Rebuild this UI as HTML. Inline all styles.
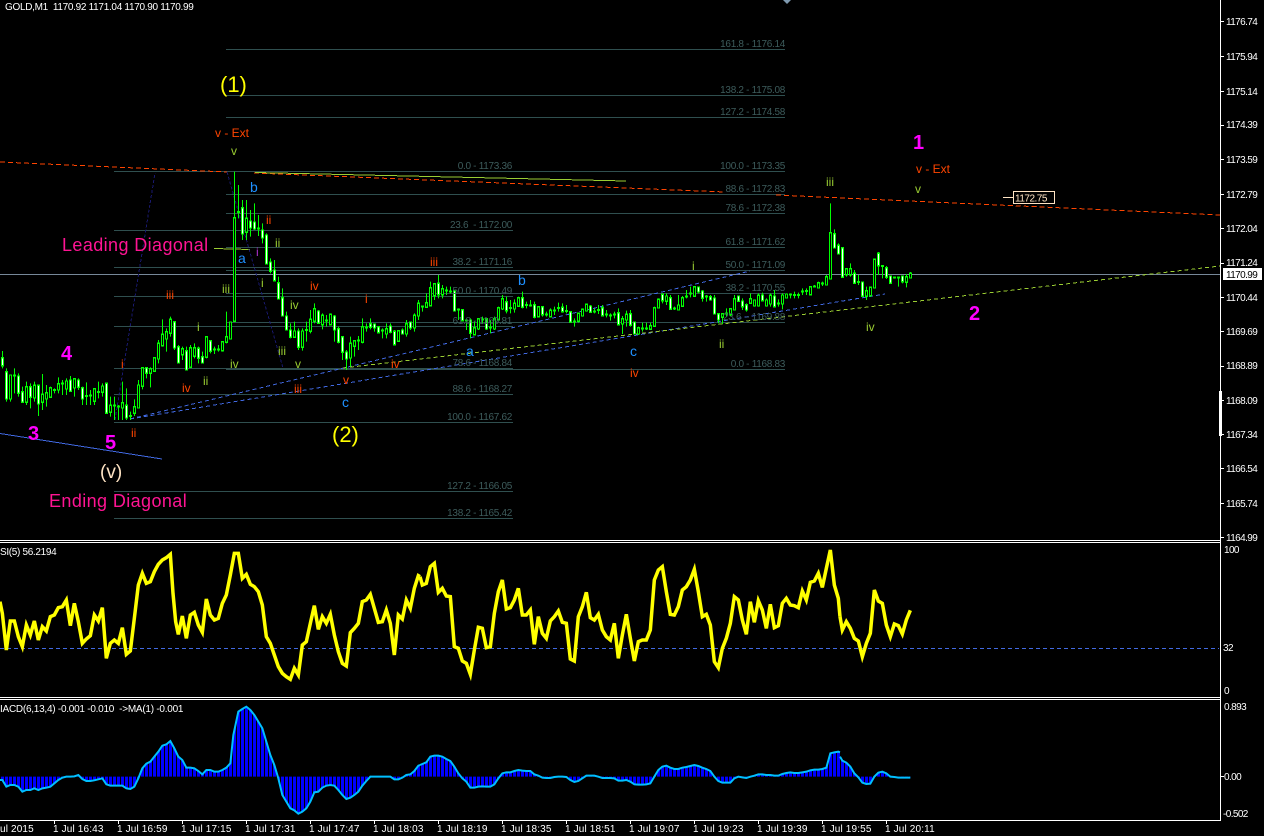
<!DOCTYPE html>
<html><head><meta charset="utf-8"><title>GOLD,M1</title>
<style>
html,body{margin:0;padding:0;background:#000;width:1264px;height:836px;overflow:hidden}
svg{display:block;font-family:"Liberation Sans",sans-serif}
text{white-space:pre}
.ax{font-size:10px;fill:#fff;letter-spacing:-.6px}
.dt{font-size:10px;fill:#fff;letter-spacing:.15px}
.fb{font-size:10px;fill:#3d5c5c;letter-spacing:-.3px;text-anchor:end}
.r{font-size:12px;fill:#ff4500}
.y{font-size:12px;fill:#9acd32}
.b{font-size:14px;fill:#1e90ff}
.m{font-size:20px;fill:#f0f;font-weight:bold}
.p{font-size:18px;fill:#ff1493;letter-spacing:.4px}
.g{font-size:22px;fill:#ff0}
</style></head><body>
<svg width="1264" height="836" viewBox="0 0 1264 836" xmlns="http://www.w3.org/2000/svg">
<defs>
<pattern id="st" patternUnits="userSpaceOnUse" width="12" height="12"><rect x="3" width="9" height="12" fill="#00f"/></pattern>
<path id="bh" d="M10 737h1v68h-1zM26 772h1v43h-1zM34 768h1v34h-1zM42 795h1v20h-1zM46 790h1v15h-1zM50 775h1v25h-1zM58 763h1v15h-1zM66 755h1v20h-1zM74 748h1v24h-1zM94 778h1v34h-1zM102 770h1v15h-1zM110 828h1v17h-1zM122 820h1v12h-1zM134 832h1v16h-1zM138 767h1v65h-1zM142 715h1v52h-1zM150 718h1v10h-1zM154 685h1v37h-1zM158 642h1v43h-1zM162 615h1v30h-1zM166 607h1v18h-1zM170 570h1v38h-1zM182 658h1v14h-1zM190 655h1v55h-1zM194 655h1v22h-1zM206 622h1v58h-1zM222 637h1v23h-1zM226 622h1v13h-1zM230 578h1v47h-1zM234 265h1v307h-1zM246 267h1v38h-1zM294 605h1v15h-1zM302 605h1v45h-1zM310 570h1v32h-1zM314 538h1v34h-1zM322 558h1v24h-1zM330 555h1v27h-1zM350 642h1v40h-1zM354 634h1v13h-1zM362 592h1v43h-1zM386 598h1v12h-1zM398 604h1v28h-1zM406 583h1v27h-1zM414 558h1v34h-1zM418 522h1v34h-1zM426 520h1v10h-1zM430 475h1v50h-1zM434 463h1v32h-1zM442 478h1v14h-1zM474 595h1v17h-1zM478 568h1v27h-1zM494 568h1v27h-1zM498 535h1v32h-1zM502 508h1v27h-1zM514 522h1v13h-1zM518 505h1v22h-1zM538 532h1v26h-1zM550 543h1v15h-1zM578 552h1v20h-1zM582 540h1v16h-1zM586 525h1v16h-1zM622 568h1v12h-1zM626 555h1v13h-1zM638 595h1v15h-1zM650 589h1v7h-1zM654 535h1v52h-1zM658 510h1v22h-1zM666 500h1v12h-1zM678 527h1v11h-1zM682 505h1v22h-1zM694 472h1v25h-1zM722 553h1v7h-1zM730 538h1v14h-1zM734 508h1v30h-1zM750 508h1v10h-1zM754 512h1v14h-1zM758 498h1v28h-1zM766 512h1v14h-1zM770 498h1v22h-1zM782 497h1v23h-1zM786 494h1v8h-1zM810 472h1v20h-1zM818 460h1v12h-1zM826 442h1v21h-1zM830 310h1v135h-1zM846 418h1v14h-1zM850 418h1v14h-1zM866 484h1v13h-1zM870 474h1v21h-1zM874 390h1v82h-1zM906 442h1v13h-1zM910 432h1v10h-1z"/>
<path id="bw" d="M2 685h1v20h-1zM6 727h1v78h-1zM18 740h1v48h-1zM22 787h1v28h-1zM30 772h1v28h-1zM38 768h1v52h-1zM70 752h1v30h-1zM78 752h1v18h-1zM82 775h1v30h-1zM106 762h1v86h-1zM126 828h1v34h-1zM146 715h1v13h-1zM174 577h1v75h-1zM178 652h1v45h-1zM186 664h1v54h-1zM198 657h1v26h-1zM202 682h1v15h-1zM210 634h1v28h-1zM242 235h1v75h-1zM250 275h1v17h-1zM254 278h1v17h-1zM262 302h1v20h-1zM266 317h1v83h-1zM270 398h1v24h-1zM274 422h1v28h-1zM278 460h1v45h-1zM282 505h1v51h-1zM286 560h1v38h-1zM290 602h1v18h-1zM298 605h1v45h-1zM318 545h1v33h-1zM334 560h1v38h-1zM338 598h1v37h-1zM342 622h1v43h-1zM346 668h1v17h-1zM370 583h1v7h-1zM374 584h1v8h-1zM378 592h1v14h-1zM390 590h1v15h-1zM394 606h1v36h-1zM402 602h1v8h-1zM410 578h1v14h-1zM438 462h1v30h-1zM454 485h1v56h-1zM462 541h1v29h-1zM470 572h1v36h-1zM486 568h1v27h-1zM506 517h1v23h-1zM522 505h1v25h-1zM534 526h1v34h-1zM542 532h1v20h-1zM562 534h1v9h-1zM570 547h1v28h-1zM590 530h1v15h-1zM602 535h1v20h-1zM618 550h1v32h-1zM630 553h1v31h-1zM634 578h1v32h-1zM662 495h1v15h-1zM670 505h1v31h-1zM698 473h1v11h-1zM702 485h1v18h-1zM710 502h1v6h-1zM714 506h1v44h-1zM718 553h1v15h-1zM738 500h1v12h-1zM742 515h1v13h-1zM746 526h1v12h-1zM762 497h1v13h-1zM774 500h1v28h-1zM834 313h1v39h-1zM838 348h1v22h-1zM842 355h1v85h-1zM854 432h1v26h-1zM862 458h1v39h-1zM878 372h1v33h-1zM886 415h1v25h-1zM890 440h1v18h-1zM902 440h1v13h-1z"/>
</defs>
<rect width="1264" height="836" fill="#000"/>
<polygon points="783,0 791,0 787,4" fill="#7f9ab0"/>

<!-- fib lines -->
<path shape-rendering="crispEdges" stroke="#2f4f4f" fill="none" d="M114 171.5H513M114 230.5H513M114 267.5H513M114 296.5H513M114 326.5H513M114 368.5H513M114 394.5H513M114 422.5H513M114 491.5H513M114 518.5H513M226 49.5H785M226 95.5H785M226 117.5H785M226 171.5H785M226 194.5H785M226 213.5H785M226 247.5H785M226 270.5H785M226 293.5H785M226 322.5H785M226 369.5H785"/>

<!-- current price line -->
<path shape-rendering="crispEdges" stroke="#778899" d="M0 274.5H1220"/>

<!-- trend lines -->
<g fill="none" shape-rendering="crispEdges">
<path stroke="#ff4500" stroke-dasharray="5 3" d="M0 162L227 172M254 173L725 192M776 195L1220 215"/>
<path stroke="#9acd32" d="M255 172.5L626 181"/>
<path stroke="#9acd32" d="M214 248.5L250 249.5"/>
<path stroke="#4169e1" d="M0 433.5L162 459"/>
<path stroke="#4169e1" stroke-dasharray="4 3" d="M130 419L750 271"/>
<path stroke="#4169e1" stroke-dasharray="4 3" d="M130 419L885 294"/>
<path stroke="#9acd32" stroke-dasharray="4 3" d="M343 368L1220 266"/>
<path stroke="#191970" stroke-dasharray="3 2" d="M115 420L155 173"/>
<path stroke="#191970" stroke-dasharray="3 2" d="M227 172L283 368"/>
</g>

<!-- candles -->
<g transform="translate(0 130) scale(1 .33333)" shape-rendering="crispEdges">
<path stroke="#0f0" fill="none" d="M2.5 663V715M6.5 715V815M10.5 735V815M14.5 715V790M18.5 730V800M22.5 770V815M26.5 755V825M30.5 760V835M34.5 755V815M38.5 765V858M42.5 732V840M46.5 765V830M50.5 770V800M54.5 775V790M58.5 742V790M62.5 750V795M66.5 745V795M70.5 738V782M74.5 745V800M78.5 745V780M82.5 770V825M86.5 757V825M90.5 780V825M94.5 775V825M98.5 755V805M102.5 760V800M106.5 762V848M110.5 800V860M114.5 800V870M118.5 825V870M122.5 755V870M126.5 775V870M130.5 845V870M134.5 808V858M138.5 750V832M142.5 712V778M146.5 712V745M150.5 712V772M154.5 685V725M158.5 630V700M162.5 568V650M166.5 595V665M170.5 560V620M174.5 575V660M178.5 645V700M182.5 650V690M186.5 650V718M190.5 645V710M194.5 640V685M198.5 650V700M202.5 665V700M206.5 620V685M210.5 630V670M214.5 650V672M218.5 645V665M222.5 635V665M226.5 545V640M230.5 575V628M234.5 125V575M238.5 165V265M242.5 210V330M246.5 210V330M250.5 240V320M254.5 220V300M258.5 255V318M262.5 280V340M266.5 310V402M270.5 385V430M274.5 390V452M278.5 440V505M282.5 475V558M286.5 545V600M290.5 580V625M294.5 575V620M298.5 595V660M302.5 595V662M306.5 575V635M310.5 540V610M314.5 520V580M318.5 540V582M322.5 550V598M326.5 555V590M330.5 550V585M334.5 555V635M338.5 590V640M342.5 620V690M346.5 660V720M350.5 620V710M354.5 630V680M358.5 618V660M362.5 565V640M366.5 580V605M370.5 565V598M374.5 580V605M378.5 590V610M382.5 595V625M386.5 580V625M390.5 580V610M394.5 600V645M398.5 600V635M402.5 595V612M406.5 570V620M410.5 575V600M414.5 550V605M418.5 510V570M422.5 528V545M426.5 490V530M430.5 455V525M434.5 465V510M438.5 435V505M442.5 465V505M446.5 470V495M450.5 470V490M454.5 480V545M458.5 535V570M462.5 538V572M466.5 570V600M470.5 565V625M474.5 575V615M478.5 565V600M482.5 560V580M486.5 565V600M490.5 570V610M494.5 560V600M498.5 530V570M502.5 495V540M506.5 500V550M510.5 510V550M514.5 508V548M518.5 500V530M522.5 485V535M526.5 515V535M530.5 510V530M534.5 515V565M538.5 530V560M542.5 530V560M546.5 545V560M550.5 535V560M554.5 530V555M558.5 518V545M562.5 520V548M566.5 525V550M570.5 545V575M574.5 565V590M578.5 548V578M582.5 535V560M586.5 522V545M590.5 525V548M594.5 535V550M598.5 525V552M602.5 525V558M606.5 540V562M610.5 550V572M614.5 545V565M618.5 535V585M622.5 558V612M626.5 542V590M630.5 540V590M634.5 575V612M638.5 590V615M642.5 578V605M646.5 578V600M650.5 578V600M654.5 530V590M658.5 505V535M662.5 490V520M666.5 490V525M670.5 495V540M674.5 530V540M678.5 495V540M682.5 498V530M686.5 480V505M690.5 470V502M694.5 468V498M698.5 470V490M702.5 480V515M706.5 495V515M710.5 495V512M714.5 495V552M718.5 550V580M722.5 550V582M726.5 535V560M730.5 535V558M734.5 495V540M738.5 498V515M742.5 505V540M746.5 520V545M750.5 490V520M754.5 510V530M758.5 490V530M762.5 488V512M766.5 505V530M770.5 490V530M774.5 480V530M778.5 508V530M782.5 490V538M786.5 490V505M790.5 490V505M794.5 485V505M798.5 488V505M802.5 475V495M806.5 475V495M810.5 468V495M814.5 465V472M818.5 455V475M822.5 455V468M826.5 435V465M830.5 220V447M834.5 298V355M838.5 340V372M842.5 355V440M846.5 415V440M850.5 400V440M854.5 420V460M858.5 435V465M862.5 455V500M866.5 470V510M870.5 472V496M874.5 390V475M878.5 366V435M882.5 405V445M886.5 408V447M890.5 438V460M894.5 440V446M898.5 440V470M902.5 440V460M906.5 432V472M910.5 426V445"/>
<g fill="#0f0" stroke="#0f0" stroke-width="2">
<use href="#bh" y="-3"/><use href="#bh" y="3"/><use href="#bw" y="-3"/><use href="#bw" y="3"/>
</g>
<use href="#bh" fill="#000"/>
<use href="#bw" fill="#fff"/>
<path stroke="#0f0" stroke-width="6" fill="none" d="M13 737h3M53 780h3M61 760h3M85 798h3M89 797h3M97 786h3M113 827h3M117 829h3M129 858h3M213 659h3M217 659h3M237 246h3M257 295h3M305 600h3M325 572h3M357 631h3M365 592h3M381 602h3M421 529h3M445 482h3M449 484h3M457 538h3M465 572h3M481 568h3M489 593h3M509 534h3M525 525h3M529 526h3M545 554h3M553 542h3M557 534h3M565 543h3M573 575h3M593 545h3M597 540h3M605 554h3M609 556h3M613 553h3M641 595h3M645 595h3M673 535h3M685 500h3M689 490h3M705 500h3M725 550h3M777 520h3M789 494h3M793 495h3M797 495h3M801 485h3M805 483h3M813 470h3M821 461h3M857 456h3M881 408h3M893 443h3M897 442h3"/>
</g>

<!-- panel frames -->
<path shape-rendering="crispEdges" stroke="#fff" fill="none" d="M0 540.5H1220M0 542.5H1220M0 697.5H1220M0 699.5H1220M0 820.5H1220M1220.5 0V821"/>
<rect x="1219" y="391" width="3" height="45" fill="#fff"/>
<path shape-rendering="crispEdges" stroke="#fff" d="M1220 21.5h4M1220 56.5h4M1220 91.5h4M1220 125.5h4M1220 159.5h4M1220 194.5h4M1220 228.5h4M1220 263.5h4M1220 297.5h4M1220 331.5h4M1220 366.5h4M1220 400.5h4M1220 434.5h4M1220 468.5h4M1220 503.5h4M1220 537.5h4M1220 776.5h4M54.5 820v4M118.5 820v4M182.5 820v4M246.5 820v4M310.5 820v4M374.5 820v4M438.5 820v4M502.5 820v4M566.5 820v4M630.5 820v4M694.5 820v4M758.5 820v4M822.5 820v4M886.5 820v4"/>

<!-- RSI -->
<path shape-rendering="crispEdges" stroke="#4169e1" stroke-dasharray="4 3" d="M0 648.5H1219"/>
<g fill="none" stroke="#ff0" stroke-width="10.5" stroke-linejoin="miter">
<path transform="translate(0 535) scale(.33333)" d="M0 200L7 235L19 345L31 258L43 258L55 305L67 335L79 270L91 300L103 258L115 315L127 275L139 288L151 245L163 240L175 218L187 215L199 195L211 272L223 205L235 260L247 325L259 312L271 302L283 240L295 258L307 218L319 370L331 325L343 315L355 325L367 278L379 358L391 348L403 250L415 150L427 115L439 145L451 140L463 110L475 88L487 75L499 68L511 58L519 175L527 260L535 298L547 243L559 310L571 240L583 232L595 270L607 292L619 192L631 240L643 255L655 250L667 205L679 180L691 120L703 55L715 55L727 130L739 118L751 148L763 155L775 170L787 210L799 305L811 325L823 360L835 395L847 415L859 425L871 433L883 400L895 420L907 330L919 320L931 265L943 212L955 283L967 245L979 265L991 238L1003 300L1015 350L1027 385L1039 393L1051 293L1063 280L1075 265L1087 200L1099 195L1111 178L1123 220L1135 262L1147 260L1159 225L1171 265L1183 360L1195 240L1207 252L1219 195L1231 220L1243 160L1255 122L1260 125"/>
<path transform="translate(420 535) scale(.33333)" d="M0 125L7 150L19 145L31 95L43 85L55 172L67 160L79 183L91 185L103 335L115 340L127 378L139 385L151 418L163 345L175 277L187 280L199 338L211 335L223 235L235 170L247 135L259 222L271 218L283 195L295 160L307 240L319 240L331 225L343 328L355 245L367 295L379 310L391 258L403 245L415 228L427 262L439 265L451 372L463 378L475 245L487 215L499 172L511 248L523 255L535 238L547 285L559 305L571 315L583 265L595 370L607 300L619 238L631 310L643 378L655 320L667 315L679 315L691 285L703 135L715 105L727 95L739 170L751 238L763 240L775 215L787 165L799 155L811 135L823 103L835 170L847 245L859 238L871 270L883 380L895 398L907 340L919 310L931 265L943 185L955 195L967 255L979 298L991 200L1003 262L1015 197L1027 225L1039 280L1051 208L1063 278L1075 272L1087 205L1099 190L1111 210L1123 212L1135 218L1147 168L1159 195L1171 142L1183 138L1195 115L1207 157L1219 100L1231 45L1243 150L1255 190L1260 245"/>
<path transform="translate(840 535) scale(.33333)" d="M0 245L7 285L19 260L31 280L43 310L55 318L67 365L79 325L91 295L103 165L115 198L127 205L139 270L151 305L163 267L175 272L187 297L199 255L211 226"/>
</g>

<!-- MACD histogram -->
<g fill="url(#st)" stroke="none">
<path transform="translate(0 535) scale(.33333)" d="M0 725L0 735L7 735L19 755L31 750L43 750L55 755L67 770L79 765L91 765L103 760L115 765L127 760L139 758L151 755L163 745L175 735L187 728L199 725L211 725L223 724L235 720L247 732L259 738L271 738L283 736L295 733L307 730L319 748L331 752L343 752L355 752L367 752L379 760L391 762L403 755L415 730L427 700L439 686L451 680L463 665L475 650L487 632L499 628L511 618L523 640L535 665L547 675L559 698L571 698L583 700L595 708L607 718L619 705L631 705L643 710L655 710L667 705L679 698L691 685L700 600L715 530L727 522L739 515L751 525L763 540L775 560L787 580L799 620L811 660L823 690L835 730L847 780L859 800L871 820L883 826L895 836L907 830L919 820L931 800L943 772L955 770L967 758L979 752L991 750L1003 752L1015 765L1027 780L1039 792L1051 788L1063 780L1075 770L1087 752L1099 738L1111 725L1123 725L1135 725L1147 725L1159 725L1171 725L1183 733L1195 733L1207 728L1219 720L1231 718L1243 708L1255 692L1260 690L1260 725Z"/>
<path transform="translate(420 535) scale(.33333)" d="M0 725L0 690L19 682L31 665L43 662L55 662L67 665L79 672L91 678L103 695L115 715L127 730L139 740L151 758L163 758L175 755L187 754L199 755L211 755L223 748L235 730L247 715L259 712L271 712L283 708L295 705L307 707L319 708L331 708L343 718L355 722L367 728L379 729L391 729L403 726L415 725L427 725L439 726L451 735L463 741L475 738L487 730L499 722L511 722L523 722L535 725L547 729L559 729L571 729L583 730L595 737L607 737L619 735L631 740L643 748L655 749L667 749L679 748L691 745L703 725L715 705L727 695L739 692L751 698L763 702L775 702L787 698L799 696L811 693L823 690L835 693L847 698L859 702L871 708L883 725L895 738L907 743L919 743L931 743L943 730L955 725L967 727L979 729L991 725L1003 722L1015 718L1027 718L1039 720L1051 720L1063 722L1075 722L1087 717L1099 714L1111 712L1123 714L1135 714L1147 712L1159 710L1171 706L1183 704L1195 704L1207 702L1219 698L1231 655L1243 652L1255 650L1260 652L1260 725Z"/>
<path transform="translate(840 535) scale(.33333)" d="M0 725L0 665L7 677L19 683L31 695L43 715L55 727L67 743L79 747L91 746L103 725L115 713L127 710L139 715L151 725L163 726L175 728L187 728L199 728L211 728L211 725Z"/>
</g>
<g fill="none" stroke="#00bfff" stroke-width="6">
<path transform="translate(0 535) scale(.33333)" d="M0 735L7 735L19 755L31 750L43 750L55 755L67 770L79 765L91 765L103 760L115 765L127 760L139 758L151 755L163 745L175 735L187 728L199 725L211 725L223 724L235 720L247 732L259 738L271 738L283 736L295 733L307 730L319 748L331 752L343 752L355 752L367 752L379 760L391 762L403 755L415 730L427 700L439 686L451 680L463 665L475 650L487 632L499 628L511 618L523 640L535 665L547 675L559 698L571 698L583 700L595 708L607 718L619 705L631 705L643 710L655 710L667 705L679 698L691 685L700 600L715 530L727 522L739 515L751 525L763 540L775 560L787 580L799 620L811 660L823 690L835 730L847 780L859 800L871 820L883 826L895 836L907 830L919 820L931 800L943 772L955 770L967 758L979 752L991 750L1003 752L1015 765L1027 780L1039 792L1051 788L1063 780L1075 770L1087 752L1099 738L1111 725L1123 725L1135 725L1147 725L1159 725L1171 725L1183 733L1195 733L1207 728L1219 720L1231 718L1243 708L1255 692L1260 690"/>
<path transform="translate(420 535) scale(.33333)" d="M0 690L19 682L31 665L43 662L55 662L67 665L79 672L91 678L103 695L115 715L127 730L139 740L151 758L163 758L175 755L187 754L199 755L211 755L223 748L235 730L247 715L259 712L271 712L283 708L295 705L307 707L319 708L331 708L343 718L355 722L367 728L379 729L391 729L403 726L415 725L427 725L439 726L451 735L463 741L475 738L487 730L499 722L511 722L523 722L535 725L547 729L559 729L571 729L583 730L595 737L607 737L619 735L631 740L643 748L655 749L667 749L679 748L691 745L703 725L715 705L727 695L739 692L751 698L763 702L775 702L787 698L799 696L811 693L823 690L835 693L847 698L859 702L871 708L883 725L895 738L907 743L919 743L931 743L943 730L955 725L967 727L979 729L991 725L1003 722L1015 718L1027 718L1039 720L1051 720L1063 722L1075 722L1087 717L1099 714L1111 712L1123 714L1135 714L1147 712L1159 710L1171 706L1183 704L1195 704L1207 702L1219 698L1231 655L1243 652L1255 650L1260 652"/>
<path transform="translate(840 535) scale(.33333)" d="M0 665L7 677L19 683L31 695L43 715L55 727L67 743L79 747L91 746L103 725L115 713L127 710L139 715L151 725L163 726L175 728L187 728L199 728L211 728"/>
</g>

<!-- fib labels -->
<text class="fb" x="512" y="169">0.0 - 1173.36</text>
<text class="fb" x="512" y="228">23.6  - 1172.00</text>
<text class="fb" x="512" y="265">38.2 - 1171.16</text>
<text class="fb" x="512" y="294">50.0 - 1170.49</text>
<text class="fb" x="512" y="324">61.8 - 1169.81</text>
<text class="fb" x="512" y="366">78.6 - 1168.84</text>
<text class="fb" x="512" y="392">88.6 - 1168.27</text>
<text class="fb" x="512" y="420">100.0 - 1167.62</text>
<text class="fb" x="512" y="489">127.2 - 1166.05</text>
<text class="fb" x="512" y="516">138.2 - 1165.42</text>
<text class="fb" x="785" y="47">161.8 - 1176.14</text>
<text class="fb" x="785" y="93">138.2 - 1175.08</text>
<text class="fb" x="785" y="115">127.2 - 1174.58</text>
<text class="fb" x="785" y="169">100.0 - 1173.35</text>
<text class="fb" x="785" y="192">88.6 - 1172.83</text>
<text class="fb" x="785" y="211">78.6 - 1172.38</text>
<text class="fb" x="785" y="245">61.8 - 1171.62</text>
<text class="fb" x="785" y="268">50.0 - 1171.09</text>
<text class="fb" x="785" y="291">38.2 - 1170.55</text>
<text class="fb" x="785" y="320">23.6  - 1169.88</text>
<text class="fb" x="785" y="367">0.0 - 1168.83</text>

<!-- wave labels -->
<text class="g" x="220" y="92">(1)</text>
<text class="g" x="332" y="442">(2)</text>
<text class="r" x="215" y="137">v - Ext</text>
<text class="r" x="916" y="173">v - Ext</text>
<text class="y" x="231" y="155">v</text>
<text class="y" x="915" y="193">v</text>
<text class="b" x="250" y="192">b</text>
<text class="b" x="238" y="263">a</text>
<text class="b" x="518" y="285">b</text>
<text class="b" x="466" y="356">a</text>
<text class="b" x="630" y="356">c</text>
<text class="b" x="342" y="407">c</text>
<text class="r" x="266" y="224">ii</text>
<text class="r" x="430" y="266">iii</text>
<text class="r" x="630" y="377">iv</text>
<text class="r" x="166" y="299">iii</text>
<text class="r" x="310" y="290">iv</text>
<text class="r" x="365" y="303">i</text>
<text class="r" x="182" y="392">iv</text>
<text class="r" x="343" y="384">v</text>
<text class="r" x="294" y="393">iii</text>
<text class="r" x="121" y="368">i</text>
<text class="r" x="131" y="437">ii</text>
<text class="r" x="391" y="368">iv</text>
<text class="y" x="826" y="186">iii</text>
<text class="y" x="866" y="331">iv</text>
<text class="y" x="692" y="270">i</text>
<text class="y" x="719" y="348">ii</text>
<text class="y" x="275" y="247">ii</text>
<text class="y" x="261" y="287">i</text>
<text class="y" x="290" y="309">iv</text>
<text class="y" x="222" y="293">iii</text>
<text class="y" x="197" y="331">i</text>
<text class="y" x="278" y="355">iii</text>
<text class="y" x="230" y="368">iv</text>
<text class="y" x="295" y="368">v</text>
<text class="y" x="203" y="385">ii</text>
<text x="256" y="256" font-size="12" fill="#b030d0">i</text>
<text class="m" x="61" y="360">4</text>
<text class="m" x="28" y="440">3</text>
<text class="m" x="105" y="449">5</text>
<text class="m" x="913" y="149">1</text>
<text class="m" x="969" y="320">2</text>
<text x="100" y="478" font-size="19" fill="#ffe4c4">(v)</text>
<text class="p" x="62" y="251">Leading Diagonal</text>
<text class="p" x="49" y="507">Ending Diagonal</text>

<!-- price tag -->
<path shape-rendering="crispEdges" stroke="#ffe4c4" d="M1003 197.5h10"/>
<rect x="1013.5" y="191.5" width="41" height="12" fill="#000" stroke="#ffe4c4" shape-rendering="crispEdges"/>
<text x="1015" y="201.5" font-size="10" letter-spacing="-.5" fill="#ffe4c4">1172.75</text>

<!-- titles -->
<text x="5" y="10" font-size="10" fill="#fff" letter-spacing="-.3">GOLD,M1  1170.92 1171.04 1170.90 1170.99</text>
<text x="0" y="555" font-size="10" fill="#fff" letter-spacing="-.33">SI(5) 56.2194</text>
<text x="0" y="712" font-size="10" fill="#fff" letter-spacing="-.25">IACD(6,13,4) -0.001 -0.010  -&gt;MA(1) -0.001</text>

<!-- price axis -->
<text class="ax" x="1226" y="25">1176.74</text>
<text class="ax" x="1226" y="60">1175.94</text>
<text class="ax" x="1226" y="95">1175.14</text>
<text class="ax" x="1226" y="128">1174.39</text>
<text class="ax" x="1226" y="163">1173.59</text>
<text class="ax" x="1226" y="198">1172.79</text>
<text class="ax" x="1226" y="232">1172.04</text>
<text class="ax" x="1226" y="266">1171.24</text>
<text class="ax" x="1226" y="301">1170.44</text>
<text class="ax" x="1226" y="335">1169.69</text>
<text class="ax" x="1226" y="369">1168.89</text>
<text class="ax" x="1226" y="404">1168.09</text>
<text class="ax" x="1226" y="438">1167.34</text>
<text class="ax" x="1226" y="472">1166.54</text>
<text class="ax" x="1226" y="507">1165.74</text>
<text class="ax" x="1226" y="541">1164.99</text>
<rect x="1223" y="268" width="39" height="12" fill="#fff"/>
<text x="1226" y="278" font-size="10" letter-spacing="-.6" fill="#000">1170.99</text>
<text class="ax" x="1224" y="553">100</text>
<text class="ax" x="1223" y="651">32</text>
<text class="ax" x="1224" y="694">0</text>
<text class="ax" x="1224" y="710">0.893</text>
<text class="ax" x="1224" y="780">0.00</text>
<text class="ax" x="1223" y="817">-0.502</text>

<!-- time axis -->
<text class="dt" x="0" y="832">ul 2015</text>
<text class="dt" x="53" y="832">1 Jul 16:43</text>
<text class="dt" x="117" y="832">1 Jul 16:59</text>
<text class="dt" x="181" y="832">1 Jul 17:15</text>
<text class="dt" x="245" y="832">1 Jul 17:31</text>
<text class="dt" x="309" y="832">1 Jul 17:47</text>
<text class="dt" x="373" y="832">1 Jul 18:03</text>
<text class="dt" x="437" y="832">1 Jul 18:19</text>
<text class="dt" x="501" y="832">1 Jul 18:35</text>
<text class="dt" x="565" y="832">1 Jul 18:51</text>
<text class="dt" x="629" y="832">1 Jul 19:07</text>
<text class="dt" x="693" y="832">1 Jul 19:23</text>
<text class="dt" x="757" y="832">1 Jul 19:39</text>
<text class="dt" x="821" y="832">1 Jul 19:55</text>
<text class="dt" x="885" y="832">1 Jul 20:11</text>
</svg>
</body></html>
